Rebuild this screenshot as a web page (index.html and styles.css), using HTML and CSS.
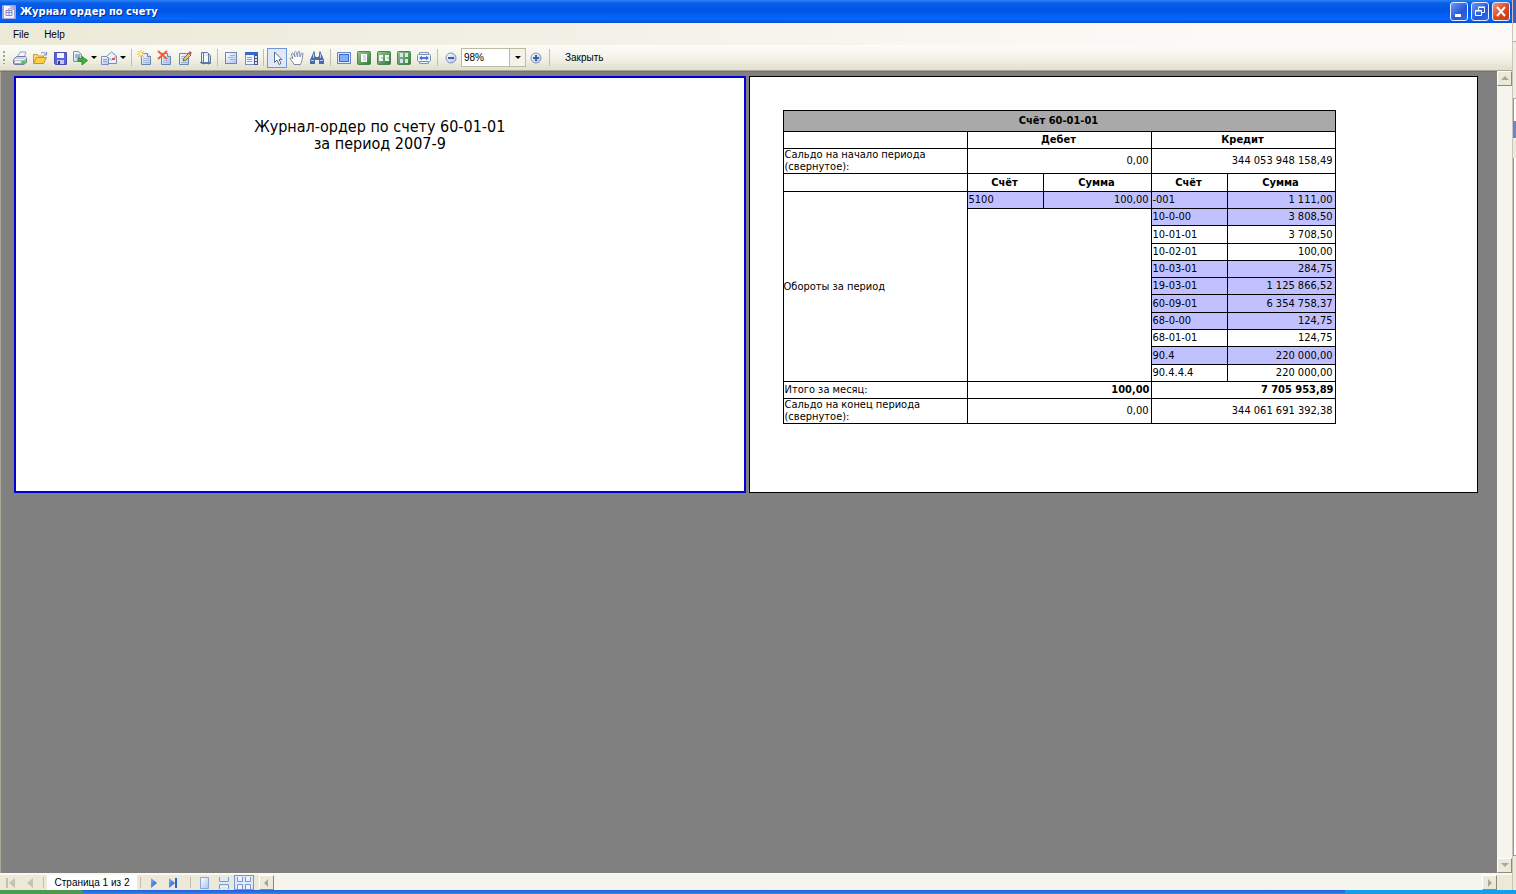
FILE: index.html
```
<!DOCTYPE html>
<html lang="ru">
<head>
<meta charset="utf-8">
<title>Журнал ордер по счету</title>
<link rel="stylesheet" href="styles.css">
</head>
<body>
<svg class="defs" aria-hidden="true">
  <defs>
    <linearGradient id="gPaper" x1="0" y1="0" x2="1" y2="1"><stop offset="0" stop-color="#fff"/><stop offset="1" stop-color="#a9c3ee"/></linearGradient>
    <linearGradient id="gSteel" x1="0" y1="0" x2="0" y2="1"><stop offset="0" stop-color="#d8deea"/><stop offset="1" stop-color="#8d9ab4"/></linearGradient>
    <linearGradient id="gGreen" x1="0" y1="0" x2="1" y2="1"><stop offset="0" stop-color="#9fc692"/><stop offset="1" stop-color="#2e7a34"/></linearGradient>
    <linearGradient id="gBlue" x1="0" y1="0" x2="1" y2="1"><stop offset="0" stop-color="#7db4ff"/><stop offset="1" stop-color="#1750d0"/></linearGradient>
    <symbol id="doc" viewBox="0 0 16 16"><path d="M4.500 3.500h6l3 3v8h-9z" fill="url(#gPaper)" stroke="#6a84b2"/><path d="M10.500 3.500v3h3" fill="#fff" stroke="#6a84b2"/><path d="M6 8.500h6M6 10.500h6M6 12.500h6" stroke="#a3b9de"/></symbol>
    <symbol id="greenbox" viewBox="0 0 16 16"><rect x="1.500" y="1.500" width="13" height="13" rx="1" fill="url(#gGreen)" stroke="#4a8550"/></symbol>
    <symbol id="lens" viewBox="0 0 16 16"><circle cx="8" cy="8" r="5" fill="url(#gPaper)" stroke="#8493b5"/></symbol>
  </defs>
</svg>
<div class="screen">
  <div class="window">
    <header class="titlebar">
      <svg class="ico" viewBox="0 0 16 16"><rect x="1" y="1" width="14" height="14" rx="1" fill="#a5a5d8"/><path d="M3 2h7l3 3v9H3z" fill="#f5f3ff"/><path d="M10 2v3h3M5 6.500h6v5H5zM8 4v7M5 8.500h6" fill="none" stroke="#8a8ac0"/></svg>
      <h1 class="title">Журнал ордер по счету</h1>
      <button class="cap" aria-label="Свернуть"><svg viewBox="0 0 16 17"><path d="M4 11h6v3H4z" fill="#fff"/></svg></button>
      <button class="cap" aria-label="Восстановить"><svg viewBox="0 0 16 17"><path d="M6.500 7V4.500h6v5H10M6 4h7" fill="none" stroke="#fff"/><path d="M3.500 7.500h6v5h-6zM3 8h7" fill="none" stroke="#fff"/></svg></button>
      <button class="cap close" aria-label="Закрыть окно"><svg viewBox="0 0 16 17"><path d="M4 4l8 9M12 4l-8 9" stroke="#fff" stroke-width="2"/></svg></button>
    </header>
    <nav class="menubar">
      <button class="menu">File</button>
      <button class="menu">Help</button>
    </nav>
    <div class="toolbar">
      <span class="grip"></span>
      <button class="tool" aria-label="Печать"><svg viewBox="0 0 16 16"><path d="M5 8l3-6h6l-2 6z" fill="#f4f7ff" stroke="#8fa3c8"/><path d="M1.500 9.500l3-3h9l1 2v4l-3 2h-9l-1-1z" fill="url(#gSteel)" stroke="#6d7d9c"/><path d="M2 9.500h9l3-2" fill="none" stroke="#f2f6fc"/><path d="M3 11h6v2H3z" fill="#eef2f8"/><path d="M10 11h3v3h-3z" fill="#3fcf3f"/></svg></button>
      <button class="tool" aria-label="Открыть"><svg viewBox="0 0 16 16"><path d="M1.500 13V4.500h4l1 1.500h5v2" fill="#f8d775" stroke="#c29d42"/><path d="M1.500 13.500l3-6h10l-3 6z" fill="#ffcf4a" stroke="#c0933a"/><path d="M9 3.500c2-2 4-1 5 1M14.500 2v3h-3" fill="none" stroke="#7289a8"/></svg></button>
      <button class="tool" aria-label="Сохранить"><svg viewBox="0 0 16 16"><path d="M2.500 2.500h12v12h-11l-1-1z" fill="#5a62dc" stroke="#484cb4"/><path d="M5 3h7v5H5z" fill="#f2f4ff"/><path d="M5 10h7v4H5z" fill="#c3c8ea"/><path d="M6 11h2v3H6z" fill="#30348a"/></svg></button>
      <button class="tool drop" aria-label="Экспорт"><svg viewBox="0 0 16 16"><path d="M1.500 1.500h5l3 3v7h-8z" fill="url(#gPaper)" stroke="#7b8fb6"/><path d="M3 5h5M3 7h5" stroke="#6784b8"/><path d="M6 8v3.500h4V15l5.500-4.500L10 6.500V9H8V8z" fill="#41b33a" stroke="#2f8f34"/></svg><i></i></button>
      <button class="tool drop" aria-label="Отправить"><svg viewBox="0 0 16 16"><path d="M5.500 6.500l5-4.500 5 4v7.500h-10z" fill="#eaf1ff" stroke="#7b8fb6"/><path d="M6 7l4.500 3L15 6.500" fill="none" stroke="#8aa0ca"/><path d="M.5 6.500h5l2 2v6h-7z" fill="url(#gPaper)" stroke="#7b8fb6"/><path d="M2 9.500h4M2 11.500h4" stroke="#8aa0ca"/><path d="M11 8h3v2h-3z" fill="#e3552c"/></svg><i></i></button>
      <span class="sep"></span>
      <button class="tool" aria-label="Новая страница"><svg viewBox="0 0 16 16"><use href="#doc"/><path d="M4 0v8M0 4h8M1 1l6 6M7 1L1 7" stroke="#f0c23b"/><circle cx="4" cy="4" r="1.500" fill="#fff8c0"/></svg></button>
      <button class="tool" aria-label="Удалить страницу"><svg viewBox="0 0 16 16"><use href="#doc"/><path d="M1 1l9 8M10 1L1 9" stroke="#f25a3c" stroke-width="2"/></svg></button>
      <button class="tool" aria-label="Изменить страницу"><svg viewBox="0 0 16 16"><path d="M2.500 3.500h9v11h-9z" fill="url(#gPaper)" stroke="#6a84b2"/><path d="M4 6.500h5M4 8.500h3M4 12.500h6" stroke="#a3b9de"/><path d="M6 11l1-3 5-5 2 2-5 5z" fill="#f2c45b" stroke="#8b6a3a"/><path d="M11 3l2-2 2 2-2 2z" fill="#c4567a"/></svg></button>
      <button class="tool" aria-label="Параметры страницы"><svg viewBox="0 0 16 16"><path d="M4.500 2.500h6l3 3v8h-9z" fill="url(#gPaper)" stroke="#61789c"/><path d="M6.500 3v11.500M11.500 4v10.500M3 12.500h11" fill="none" stroke="#61789c"/><path d="M7 6h4v6H7z" fill="#f5f8ff"/></svg></button>
      <span class="sep"></span>
      <button class="tool" aria-label="Закладки"><svg viewBox="0 0 16 16"><rect x="2.500" y="2.500" width="11" height="11" fill="url(#gPaper)" stroke="#7187b0"/><path d="M7 5.500h5M5 7.500h5M7 9.500h5" stroke="#9fb2d4"/></svg></button>
      <button class="tool" aria-label="Миниатюры"><svg viewBox="0 0 16 16"><rect x="2.500" y="2.500" width="12" height="12" fill="#eff4ff" stroke="#7b8fb6"/><path d="M2 2h13v3H2z" fill="#3569d2"/><path d="M4 7.500h5M4 9.500h5M4 11.500h5" stroke="#7f9fe0"/><path d="M11 5h4v10h-4z" fill="#48597c"/><path d="M12 6h2v2h-2zM12 9h2v2h-2zM12 12h2v2h-2z" fill="#dce7fb"/></svg></button>
      <span class="sep"></span>
      <button class="tool on" aria-label="Выделение"><svg viewBox="0 0 16 16"><path d="M5.500 2v10.500l2.500-2.500 2 4.500 2-1-2-4h3z" fill="#fff" stroke="#5d6f90"/></svg></button>
      <button class="tool" aria-label="Рука"><svg viewBox="0 0 16 16"><path d="M5 14.500c-1-3-3-4-4-6 1-1.500 2-.5 3 .5L2.500 4c.5-1.500 1.500-1 2 0L6 7 5.500 2.500c.5-1.500 1.500-1 2 0L8.500 7l.5-5c.5-1 1.500-1 1.700 0L11 7l1.500-3.500c.7-1 1.700-.5 1.500.5L13 9.500c0 2-1 3-1.500 5z" fill="#fff" stroke="#7d8ba8"/></svg></button>
      <button class="tool" aria-label="Поиск"><svg viewBox="0 0 16 16"><path d="M4 3h2v3l1 1h2l1-1V3h2l3 7v4h-5v-4H6v4H1v-4z" fill="#4a6cab"/><path d="M4 2.500h2M10 2.500h2" stroke="#6f8abb" stroke-width="2"/><path d="M2 10.500h3M11 10.500h3M4.500 4v4M11.500 4v4" stroke="#b2c8f0"/></svg></button>
      <span class="sep"></span>
      <button class="tool" aria-label="Во весь экран"><svg viewBox="0 0 16 16"><rect x="1.500" y="2.500" width="13" height="11" fill="#dce8fc" stroke="#6d86bb"/><rect x="3.500" y="4.500" width="9" height="7" fill="#82aef8" stroke="#396cd8"/></svg></button>
      <button class="tool" aria-label="Одна страница"><svg viewBox="0 0 16 16"><use href="#greenbox"/><path d="M5 4h6v8H5z" fill="#fff"/><path d="M7 6h3M7 8h3M7 10h3" stroke="#a8bfd8"/></svg></button>
      <button class="tool" aria-label="Две страницы"><svg viewBox="0 0 16 16"><use href="#greenbox"/><path d="M3 5h4v6H3zM9 5h4v6H9z" fill="#f0f5fa"/><path d="M5 7h2v2H5zM11 7h2v2h-2z" fill="#b5c8da"/></svg></button>
      <button class="tool" aria-label="Несколько страниц"><svg viewBox="0 0 16 16"><use href="#greenbox"/><path d="M4 3h3v4H4zM9 3h3v4H9zM4 9h3v4H4zM9 9h3v4H9z" fill="#d5e4ee"/></svg></button>
      <button class="tool" aria-label="По ширине"><svg viewBox="0 0 16 16"><path d="M3.500 2.500h9v3h-9zM3.500 10.500h9v3h-9z" fill="#e8f0fd" stroke="#8496ba"/><rect x="1.500" y="4.500" width="13" height="7" rx="1" fill="#f4f8ff" stroke="#7e91b8"/><path d="M3 8l3-2.500V7h4V5.500L13 8l-3 2.500V9H6v1.500z" fill="#4776cf"/></svg></button>
      <span class="sep"></span>
      <button class="tool" aria-label="Уменьшить"><svg viewBox="0 0 16 16"><use href="#lens"/><path d="M5 8h6" stroke="#3c5fa8" stroke-width="2"/></svg></button>
      <div class="combo"><input value="98%" aria-label="Масштаб"><button aria-label="Выбрать масштаб"><i></i></button></div>
      <button class="tool" aria-label="Увеличить"><svg viewBox="0 0 16 16"><use href="#lens"/><path d="M5 8h6M8 5v6" stroke="#3c5fa8" stroke-width="2"/></svg></button>
      <span class="sep"></span>
      <button class="textbtn">Закрыть</button>
    </div>
    <div class="viewer">
      <main class="pages">
        <section class="page current">
          <h2 class="heading">Журнал-ордер по счету 60-01-01<br>за период 2007-9</h2>
        </section>
        <section class="page">
          <table class="report">
            <colgroup><col class="c-name"><col class="c-acc"><col class="c-sum"><col class="c-acc"><col class="c-sum"></colgroup>
            <tr class="top"><th colspan="5">Счёт 60-01-01</th></tr>
            <tr><td></td><th colspan="2">Дебет</th><th colspan="2">Кредит</th></tr>
            <tr class="two"><td>Сальдо на начало периода (свернутое):</td><td class="n" colspan="2">0,00</td><td class="n" colspan="2">344 053 948 158,49</td></tr>
            <tr class="r18"><td></td><th>Счёт</th><th>Сумма</th><th>Счёт</th><th>Сумма</th></tr>
            <tr><td rowspan="11">Обороты за период</td><td class="hl">5100</td><td class="hl n">100,00</td><td class="hl">-001</td><td class="hl n">1 111,00</td></tr>
            <tr><td colspan="2" rowspan="10"></td><td class="hl">10-0-00</td><td class="hl n">3 808,50</td></tr>
            <tr class="r18"><td>10-01-01</td><td class="n">3 708,50</td></tr>
            <tr><td>10-02-01</td><td class="n">100,00</td></tr>
            <tr><td class="hl">10-03-01</td><td class="hl n">284,75</td></tr>
            <tr><td class="hl">19-03-01</td><td class="hl n">1 125 866,52</td></tr>
            <tr class="r18"><td class="hl">60-09-01</td><td class="hl n">6 354 758,37</td></tr>
            <tr><td class="hl">68-0-00</td><td class="hl n">124,75</td></tr>
            <tr><td>68-01-01</td><td class="n">124,75</td></tr>
            <tr class="r18"><td class="hl">90.4</td><td class="hl n">220 000,00</td></tr>
            <tr><td>90.4.4.4</td><td class="n">220 000,00</td></tr>
            <tr><td>Итого за месяц:</td><td class="n b" colspan="2">100,00</td><td class="n b" colspan="2">7 705 953,89</td></tr>
            <tr class="two"><td>Сальдо на конец периода (свернутое):</td><td class="n" colspan="2">0,00</td><td class="n" colspan="2">344 061 691 392,38</td></tr>
          </table>
        </section>
      </main>
      <div class="vscroll">
        <button class="sb" aria-label="Вверх"><svg viewBox="0 0 13 13"><path d="M3 8l4-4 4 4z"/></svg></button>
        <button class="sb" aria-label="Вниз"><svg viewBox="0 0 13 13"><path d="M3 4h8L7 8z"/></svg></button>
      </div>
    </div>
    <footer class="status">
      <button class="nav off" aria-label="Первая"><svg viewBox="0 0 16 14"><path d="M5 2v10" stroke="#c5c2b2" stroke-width="2"/><path d="M13 2v10L7 7z" fill="#c5c2b2"/></svg></button>
      <button class="nav off" aria-label="Предыдущая"><svg viewBox="0 0 16 14"><path d="M11 2v10L5 7z" fill="#c5c2b2"/></svg></button>
      <span class="sep"></span>
      <input class="pageno" value="Страница 1 из 2" aria-label="Страница">
      <span class="sep"></span>
      <button class="nav" aria-label="Следующая"><svg viewBox="0 0 16 14"><path d="M5 2v10l6-5z" fill="url(#gBlue)"/></svg></button>
      <button class="nav" aria-label="Последняя"><svg viewBox="0 0 16 14"><path d="M3 2v10l6-5z" fill="url(#gBlue)"/><path d="M10 2v10" stroke="#2a62d4" stroke-width="2"/></svg></button>
      <span class="sep"></span>
      <button class="nav" aria-label="Страница целиком"><svg viewBox="0 0 16 14"><path d="M4.500 1.500h8v11h-8z" fill="url(#gPaper)" stroke="#86a6dc"/></svg></button>
      <button class="nav" aria-label="Непрерывно"><svg viewBox="0 0 16 14"><path d="M3.500 1v4.500h9V1M3.500 13V8.500h9V13" fill="#dfe9fb" stroke="#7d9bce"/></svg></button>
      <button class="nav on" aria-label="Несколько"><svg viewBox="0 0 16 14"><path d="M1.500 1v4.500h5V1M9.500 1v4.500h5V1M1.500 13V8.500h5V13M9.500 13V8.500h5V13" fill="#edf3ff" stroke="#7796d0"/></svg></button>
      <div class="hscroll">
        <button class="sb" aria-label="Влево"><svg viewBox="0 0 13 13"><path d="M8 3v8L4 7z"/></svg></button>
        <button class="sb" aria-label="Вправо"><svg viewBox="0 0 13 13"><path d="M5 3v8l4-4z"/></svg></button>
      </div>
    </footer>
  </div>
  <aside class="behind"><span class="b-title"></span><span class="b-a"></span><span class="b-b"></span><span class="b-c"></span><span class="b-d"></span><span class="b-e"></span><span class="b-f"></span></aside>
  <div class="taskbar"><span class="start"></span><span class="tray"></span></div>
</div>
</body>
</html>
```
FILE: styles.css
```
* { box-sizing: border-box; }
body { margin: 0; font: 11px "Liberation Sans", Arial, sans-serif; color: #000; }
button, input { font: inherit; color: inherit; border: 0; padding: 0; margin: 0; background: none; }
svg { display: block; }
.defs { position: absolute; width: 0; height: 0; }
.screen { display: grid; grid-template-columns: 1fr 4px; grid-template-rows: 1fr 4px; height: 100vh; overflow: hidden; }
.window { display: flex; flex-direction: column; min-width: 0; min-height: 0; background: #ece9d8; }

.titlebar { display: flex; align-items: center; gap: 3px; height: 23px; padding: 0 2px 0 1px; background: linear-gradient(#2a82f5 0, #0a5fe8 3px, #0054e3 10px, #0566ff 19px, #0350d0 23px); }
.ico { width: 16px; height: 16px; }
.title { flex: 1; margin: 0; font: bold 11px "DejaVu Sans Condensed", "DejaVu Sans", sans-serif; color: #fff; text-shadow: 1px 1px #0a2a88; }
.cap { width: 18px; height: 19px; border: 1px solid #e4ecff; border-radius: 3px; background: linear-gradient(135deg, #6c97f5, #2457d8 60%, #2f6cf0); }
.cap svg { width: 16px; height: 17px; }
.close { background: linear-gradient(135deg, #f0997c, #dc4a22 50%, #c43a14); }

.menubar { display: flex; gap: 13px; height: 22px; padding-left: 12px; background: linear-gradient(90deg, #ece9d8, #fbfaf7 80%); }
.menu { font-size: 10px; padding: 0 1px; }

.toolbar { display: flex; align-items: center; height: 25px; padding: 0 3px; background: linear-gradient(#fcfcf8, #f4f3e8 50%, #e2dfce); }
.grip { width: 3px; height: 13px; margin-right: 4px; background: repeating-linear-gradient(#a5a392 0 2px, transparent 2px 4px); border-right: 1px solid #f4f3e8; }
.tool { flex: none; display: flex; align-items: center; justify-content: center; width: 20px; height: 20px; }
.tool svg { width: 16px; height: 16px; }
.drop { width: 29px; gap: 3px; }
.tool i, .combo i { border: 3px solid transparent; border-top-color: #000; border-bottom: 0; }
.on { background: #e1e8f6; border: 1px solid #6f96d6; }
.sep { flex: none; width: 1px; height: 17px; margin: 0 3px; background: #c1beac; }
.toolbar .sep ~ .sep { margin-left: 2px; }
.toolbar .on ~ .sep { margin-left: 3px; }
.combo { display: flex; width: 65px; height: 19px; border: 1px solid #bdbaa6; background: #fff; }
.combo input { flex: 1; min-width: 0; padding: 0 2px 1px; font-size: 10px; }
.combo button { display: flex; align-items: center; justify-content: center; width: 16px; border-left: 1px solid #bdbaa6; background: #f4f3ea; }
.textbtn { margin-left: 12px; font-size: 10px; }

.viewer { flex: 1; display: flex; min-height: 0; border-top: 1px solid #aca899; border-bottom: 2px solid #f8f7f0; }
.pages { flex: 1; display: flex; align-items: flex-start; gap: 3px; padding: 4px 19px 0 13px; background: #808080; border-left: 1px solid #aca899; border-top: 1px solid #77756a; }
.page { flex: 1; min-width: 0; min-height: 417px; padding: 33px; background: #fff; border: 1px solid #000; }
.current { border: 2px solid #0000d8; }
.heading { margin: 7px 0 0; text-align: center; font: 16px/17px "DejaVu Sans Condensed", "DejaVu Sans", sans-serif; }

.report { width: 553px; table-layout: fixed; border-collapse: collapse; font: 11px/12px "DejaVu Sans Condensed", "DejaVu Sans", sans-serif; }
.report td, .report th { height: 17px; padding: 0 1px 0 0; border: 1px solid #000; vertical-align: middle; }
.report td:not(.n):not([rowspan]) { padding-left: 1px; }
.report .n { padding-right: 2px; }
.report .b { padding-right: 1px; }
.c-name { width: 184px; }
.c-acc { width: 76px; }
.report .top th { height: 21px; background: #a9a9a9; }
.report .r18 > * { height: 18px; }
.report .two > * { height: 25px; }
.report .hl { background: #c0c0ff; }
.n { text-align: right; }
.b { font-weight: bold; }

.vscroll { display: flex; flex-direction: column; justify-content: space-between; width: 15px; background: #f5f4ed; }
.sb { flex: none; width: 15px; height: 15px; background: #ece9d8; border: 1px solid; border-color: #fff #8d8a78 #8d8a78 #fff; }
.sb svg { width: 13px; height: 13px; fill: #aca899; }

.status { display: flex; align-items: center; height: 15px; }
.nav { flex: none; display: flex; align-items: center; justify-content: center; width: 20px; height: 15px; }
.nav svg { width: 16px; height: 14px; }
.status .sep { height: 11px; }
.status .sep:last-of-type { margin-left: 6px; }
.pageno { width: 90px; height: 15px; background: #fff; text-align: center; font-size: 10px; }
.hscroll { flex: 1; display: flex; justify-content: space-between; margin: 0 15px 0 5px; background: #f5f4ed; }

.behind { display: flex; flex-direction: column; background: #ece9d8; border-left: 1px solid #c8c5b4; }
.b-title { height: 23px; background: #4a5cb8; }
.b-a { height: 19px; background: #f6f5f0; border-bottom: 1px solid #aca899; }
.b-b { height: 57px; background: #f0eee4; border-bottom: 1px solid #aca899; }
.b-c { height: 22px; background: #fff; border-left: 1px solid #7f9db9; }
.b-d { height: 17px; background: #6a86d0; }
.b-e { height: 20px; background: #ece9d8; }
.b-f { height: 698px; background: #fff; border-left: 1px solid #7f9db9; border-bottom: 1px solid #7f9db9; }
.taskbar { grid-column: 1 / -1; display: flex; justify-content: space-between; background: linear-gradient(#1d5fd8, #3a80f0); }
.start { width: 84px; background: #4d9a4d; border-radius: 0 4px 0 0; }
.tray { width: 171px; background: #12a0ee; }
```
